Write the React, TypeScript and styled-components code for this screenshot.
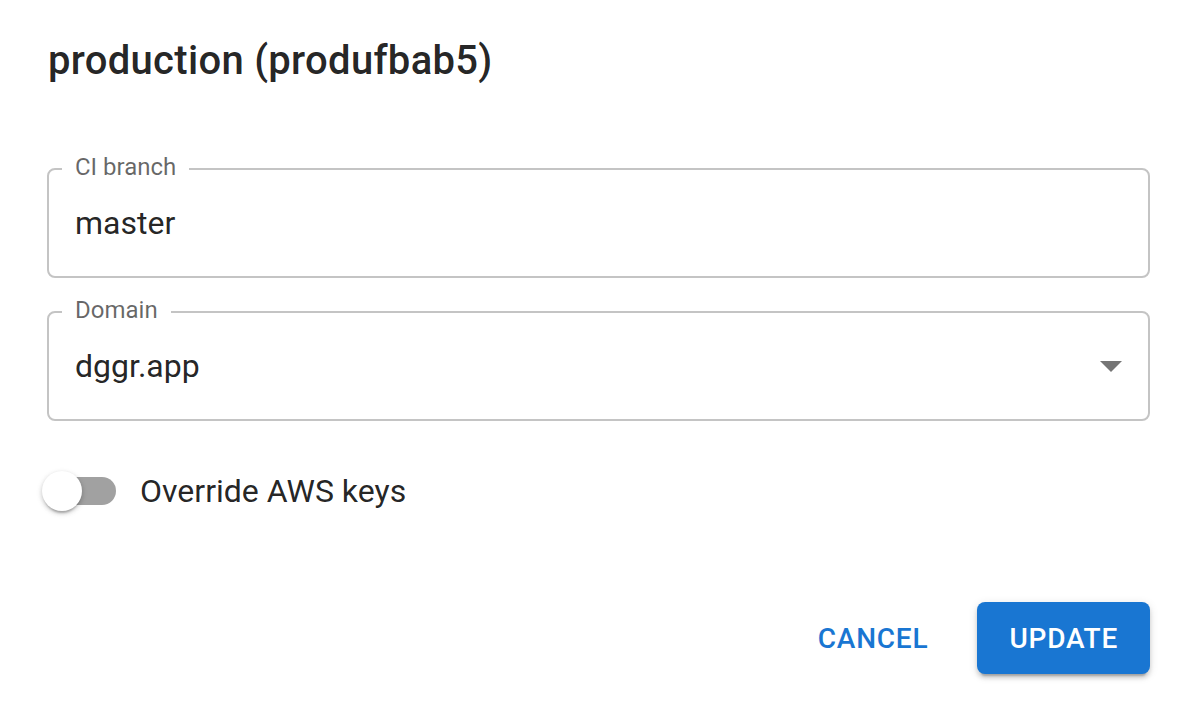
import React from "react";
import styled, { createGlobalStyle } from "styled-components";

const GlobalStyle = createGlobalStyle`
  html, body {
    margin: 0;
    padding: 0;
    background: #ffffff;
  }
  body {
    font-family: Roboto, "Liberation Sans", Arial, sans-serif;
    color: rgba(0, 0, 0, 0.87);
    -webkit-font-smoothing: antialiased;
  }
`;

const Dialog = styled.div`
  width: 1198px;
  height: 704px;
  background: #ffffff;
  display: flex;
  flex-direction: column;
  box-sizing: border-box;
  overflow: hidden;
`;

const Title = styled.h2`
  margin: 0;
  padding: 29px 48px 0;
  font-size: 40px;
  font-weight: 500;
  line-height: 64px;
  letter-spacing: 0.0075em;
  color: rgba(0, 0, 0, 0.87);
`;

const Content = styled.div`
  padding: 75px 48px 0 47px;
  display: flex;
  flex-direction: column;
  gap: 33px;
`;

const Field = styled.div`
  position: relative;
  height: 110px;
  box-sizing: border-box;
  border: 2px solid #c4c4c4;
  border-radius: 8px;
  display: flex;
  align-items: center;
  padding: 0 28px 0 26px;
`;

const FieldLabel = styled.span`
  position: absolute;
  top: -18px;
  left: 13px;
  padding: 0 13px;
  background: #ffffff;
  font-size: 24px;
  line-height: 30px;
  color: rgba(0, 0, 0, 0.6);
`;

const FieldValue = styled.span`
  flex: 1;
  font-size: 32px;
  line-height: 38px;
  padding-top: 0;
  color: rgba(0, 0, 0, 0.87);
`;

const Arrow = styled.svg`
  width: 22px;
  height: 12px;
  margin-top: 2px;
  margin-right: -2px;
`;

const SwitchRow = styled.label`
  display: flex;
  align-items: center;
  margin-top: 17px;
  margin-left: -5px;
  gap: 24px;
`;

const SwitchBox = styled.span`
  position: relative;
  width: 74px;
  height: 40px;
  display: flex;
  align-items: center;
  justify-content: flex-end;
`;

const Track = styled.span`
  width: 69px;
  height: 28px;
  border-radius: 14px;
  background: #a1a1a1;
`;

const Thumb = styled.span`
  position: absolute;
  left: 0;
  top: 0;
  width: 40px;
  height: 40px;
  border-radius: 50%;
  background: #ffffff;
  box-shadow: 0 4px 2px -2px rgba(0, 0, 0, 0.2), 0 2px 4px 0 rgba(0, 0, 0, 0.14),
    0 2px 6px 0 rgba(0, 0, 0, 0.12);
`;

const SwitchText = styled.span`
  font-size: 32px;
  line-height: 38px;
  color: rgba(0, 0, 0, 0.87);
`;

const Actions = styled.div`
  margin-top: auto;
  padding: 0 48px 30px;
  display: flex;
  justify-content: flex-end;
  align-items: center;
  gap: 33px;
`;

const Button = styled.button<{ $contained?: boolean }>`
  font-family: Roboto, "Liberation Sans", Arial, sans-serif;
  font-size: 28px;
  font-weight: 500;
  letter-spacing: 0.028em;
  text-transform: uppercase;
  height: 72px;
  border: none;
  border-radius: 8px;
  cursor: pointer;
  padding: ${(p) => (p.$contained ? "0 32px" : "0 16px")};
  background: ${(p) => (p.$contained ? "#1976d2" : "transparent")};
  color: ${(p) => (p.$contained ? "#ffffff" : "#1976d2")};
  box-shadow: ${(p) =>
    p.$contained
      ? "0 6px 2px -4px rgba(0,0,0,0.2), 0 4px 4px 0 rgba(0,0,0,0.14), 0 2px 10px 0 rgba(0,0,0,0.12)"
      : "none"};
`;

export default function App(): JSX.Element {
  return (
    <>
      <GlobalStyle />
      <Dialog>
        <Title>production (produfbab5)</Title>
        <Content>
          <Field>
            <FieldLabel>CI branch</FieldLabel>
            <FieldValue>master</FieldValue>
          </Field>
          <Field>
            <FieldLabel>Domain</FieldLabel>
            <FieldValue>dggr.app</FieldValue>
            <Arrow viewBox="0 0 22 12">
              <path d="M0 0 L22 0 L11 11 Z" fill="rgba(0,0,0,0.54)" />
            </Arrow>
          </Field>
          <SwitchRow>
            <SwitchBox>
              <Track />
              <Thumb />
            </SwitchBox>
            <SwitchText>Override AWS keys</SwitchText>
          </SwitchRow>
        </Content>
        <Actions>
          <Button>Cancel</Button>
          <Button $contained>Update</Button>
        </Actions>
      </Dialog>
    </>
  );
}
